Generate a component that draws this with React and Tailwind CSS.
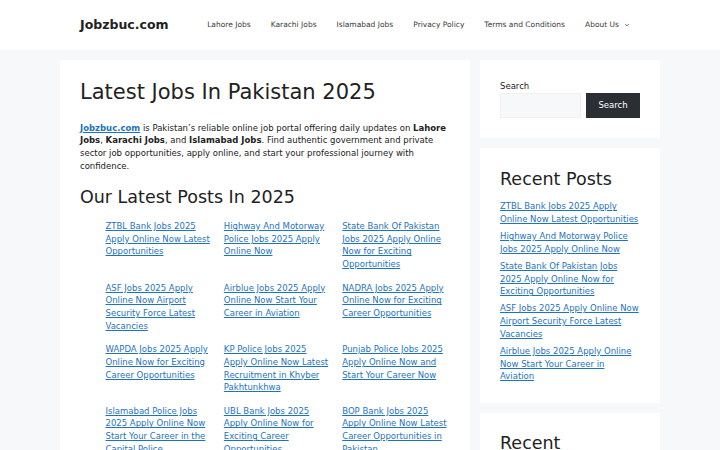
import React from "react";

const posts = [
  "ZTBL Bank Jobs 2025 Apply Online Now Latest Opportunities",
  "Highway And Motorway Police Jobs 2025 Apply Online Now",
  "State Bank Of Pakistan Jobs 2025 Apply Online Now for Exciting Opportunities",
  "ASF Jobs 2025 Apply Online Now Airport Security Force Latest Vacancies",
  "Airblue Jobs 2025 Apply Online Now Start Your Career in Aviation",
  "NADRA Jobs 2025 Apply Online Now for Exciting Career Opportunities",
  "WAPDA Jobs 2025 Apply Online Now for Exciting Career Opportunities",
  "KP Police Jobs 2025 Apply Online Now Latest Recruitment in Khyber Pakhtunkhwa",
  "Punjab Police Jobs 2025 Apply Online Now and Start Your Career Now",
  "Islamabad Police Jobs 2025 Apply Online Now Start Your Career in the Capital Police",
  "UBL Bank Jobs 2025 Apply Online Now for Exciting Career Opportunities",
  "BOP Bank Jobs 2025 Apply Online Now Latest Career Opportunities in Pakistan",
];

const navItems = ["Lahore Jobs", "Karachi Jobs", "Islamabad Jobs", "Privacy Policy", "Terms and Conditions"];

export default function App() {
  return (
    <div className="min-h-screen bg-[#f7f8f9] font-['DejaVu_Sans',sans-serif] text-[#222222]">
      <header className="bg-white">
        <div className="mx-auto flex h-[50px] w-[600px] items-center justify-between px-5">
          <a className="text-[12.5px] font-bold leading-none text-[#222222]" href="#">
            Jobzbuc.com
          </a>
          <nav className="flex items-center text-[7.5px] text-[#3a3a3a]">
            {navItems.map((n) => (
              <a key={n} href="#" className="px-[10px]">
                {n}
              </a>
            ))}
            <a href="#" className="flex items-center pl-[10px] pr-[10px]">
              About Us
              <svg className="ml-[5px]" width="6" height="6" viewBox="0 0 10 10" fill="none" stroke="#3a3a3a" strokeWidth="1.3">
                <path d="M2 3.5 L5 6.5 L8 3.5" />
              </svg>
            </a>
          </nav>
        </div>
      </header>

      <div className="mx-auto flex w-[600px] items-start pt-[10px]">
        <main className="mr-[10px] w-[410px] bg-white p-5 pb-10">
          <h1 className="text-[21px] font-normal leading-[1.2] text-[#222222]">Latest Jobs In Pakistan 2025</h1>
          <p className="mt-[16.4px] text-[8.5px] leading-[1.5]">
            <a href="#" className="font-bold text-[#1e73be] underline">Jobzbuc.com</a> is Pakistan’s reliable online job portal
            offering daily updates on <b>Lahore Jobs</b>, <b>Karachi Jobs</b>, and <b>Islamabad Jobs</b>. Find authentic
            government and private sector job opportunities, apply online, and start your professional journey with
            confidence.
          </p>
          <h2 className="mt-[14.75px] text-[17.5px] font-normal leading-[1.2]">Our Latest Posts In 2025</h2>
          <ul className="ml-[25.5px] mt-[11.6px] grid grid-cols-3 gap-x-[10.6px] gap-y-[10.6px] text-[8.5px] leading-[1.5]">
            {posts.map((p) => (
              <li key={p}>
                <a href="#" className="text-[#1e73be] underline">{p}</a>
              </li>
            ))}
          </ul>
        </main>

        <aside className="flex w-[180px] flex-col gap-[10px]">
          <section className="bg-white p-5">
            <label className="block text-[8.5px] leading-[1.5]">Search</label>
            <div className="mt-[0.5px] flex gap-[5px]">
              <input className="h-[25px] w-[81px] border border-[#f0f0f0] bg-[#f7f8f9] outline-none" />
              <button className="h-[25px] w-[54px] bg-[#2b2f33] text-[8.5px] text-white">Search</button>
            </div>
          </section>
          <section className="bg-white p-5">
            <h2 className="mt-[1px] text-[17.5px] font-normal leading-[1.2]">Recent Posts</h2>
            <ul className="mt-[10px] flex flex-col gap-[4.25px] text-[8.5px] leading-[1.5]">
              {posts.slice(0, 5).map((p) => (
                <li key={p}>
                  <a href="#" className="text-[#1e73be] underline">{p}</a>
                </li>
              ))}
            </ul>
          </section>
          <section className="bg-white p-5">
            <h2 className="text-[17.5px] font-normal leading-[1.2]">Recent Comments</h2>
            <p className="mt-[10px] text-[8.5px] leading-[1.5]">No comments to show.</p>
          </section>
        </aside>
      </div>
    </div>
  );
}
